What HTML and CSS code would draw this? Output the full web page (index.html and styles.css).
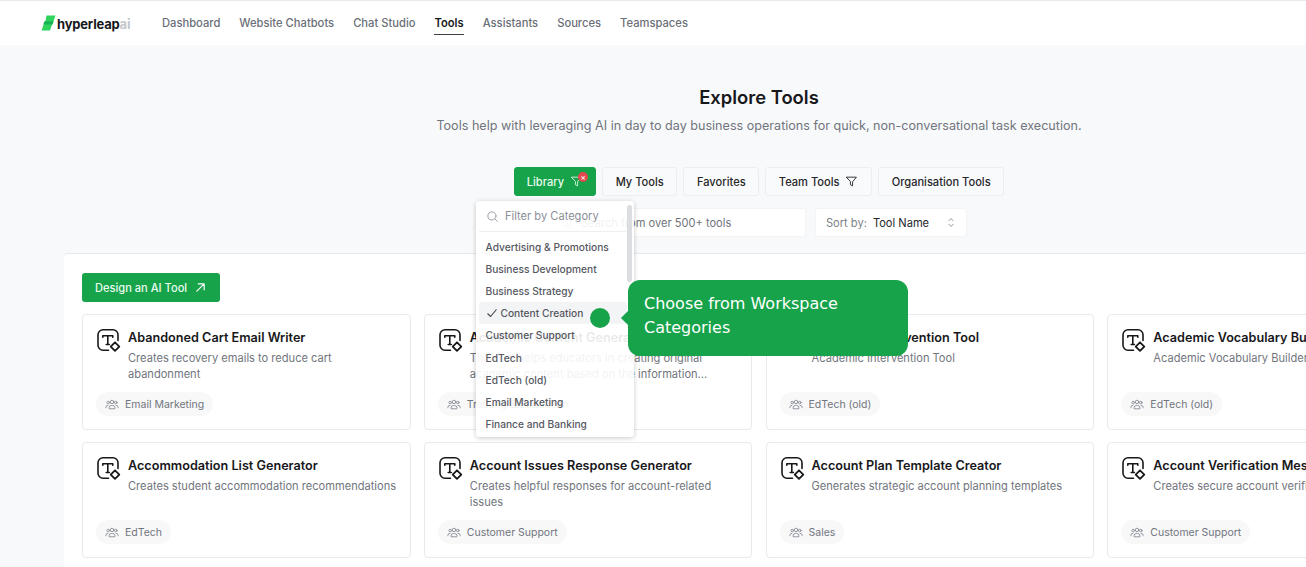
FILE: index.html
```html
<!DOCTYPE html>
<html lang="en">
<head>
<meta charset="utf-8">
<title>Explore Tools</title>
<link rel="stylesheet" href="styles.css">
</head>
<body>
<svg class="defs" width="0" height="0">
  <defs>
    <symbol id="tool" viewBox="0 0 24 24" fill="none" stroke="currentColor" stroke-width="1.6" stroke-linecap="round" stroke-linejoin="round">
      <path d="M11.5 21.2H6a5 5 0 0 1-5-5V5.8a5 5 0 0 1 5-5h10a5 5 0 0 1 5 5V11.500"/>
      <path d="M5.800 8.200V6.700h10v1.500M10.800 6.700v8.800M9.200 15.500h3.200"/>
      <path d="M18 13.300l4.300 4.300-4.300 4.300-4.300-4.300z" stroke-width="1.8"/>
    </symbol>
    <symbol id="users" viewBox="0 0 24 24" fill="none" stroke="currentColor" stroke-width="1.5" stroke-linecap="round" stroke-linejoin="round">
      <circle cx="12" cy="8.500" r="3"/>
      <circle cx="5.500" cy="9.500" r="2.200"/>
      <circle cx="18.500" cy="9.500" r="2.200"/>
      <path d="M7 19.500v-1a4 4 0 0 1 4-4h2a4 4 0 0 1 4 4v1z"/>
      <path d="M1.500 18.500v-.8a3.500 3.500 0 0 1 3.500-3.500M22.500 18.500v-.8a3.500 3.500 0 0 0-3.500-3.500"/>
    </symbol>
    <symbol id="filter" viewBox="0 0 24 24" fill="none" stroke="currentColor" stroke-width="1.7" stroke-linecap="round" stroke-linejoin="round">
      <path d="M3 4h18l-7 8.500V20l-4-2v-5.500z"/>
    </symbol>
    <symbol id="search" viewBox="0 0 24 24" fill="none" stroke="currentColor" stroke-width="1.8" stroke-linecap="round">
      <circle cx="11" cy="11" r="7.500"/><path d="M21 21l-4.500-4.500"/>
    </symbol>
  </defs>
</svg>

<header class="topbar">
  <div class="logo">
    <svg class="logo-mark" viewBox="0 0 15 16" width="15" height="16"><path fill="#2fd45f" d="M5.500 0.500h9l-1.800 5.200-2 4.700-1.700 5H0.500l2-5.300 2-4.400z"/><path fill="#16b355" d="M3.500 6.200h9.200l-1.200 3.300H2.200z"/></svg>
    <span class="logo-name">hyperleap<span class="logo-ai">ai</span></span>
  </div>
  <nav class="nav">
    <a class="nav-item">Dashboard</a>
    <a class="nav-item">Website Chatbots</a>
    <a class="nav-item">Chat Studio</a>
    <a class="nav-item is-active">Tools</a>
    <a class="nav-item">Assistants</a>
    <a class="nav-item">Sources</a>
    <a class="nav-item">Teamspaces</a>
  </nav>
</header>

<div class="page">
  <section class="hero">
    <h1 class="title">Explore Tools</h1>
    <p class="subtitle">Tools help with leveraging AI in day to day business operations for quick, non-conversational task execution.</p>
    <div class="tabs">
      <button class="tab tab-primary">Library
        <span class="filter-wrap">
          <svg class="ico-filter"><use href="#filter"/></svg>
          <span class="badge">×</span>
        </span>
      </button>
      <button class="tab">My Tools</button>
      <button class="tab">Favorites</button>
      <button class="tab">Team Tools <svg class="ico-filter dark"><use href="#filter"/></svg></button>
      <button class="tab">Organisation Tools</button>
    </div>
    <div class="controls">
      <div class="search">
        <svg class="ico-search"><use href="#search"/></svg>
        <span>Search from over 500+ tools</span>
      </div>
      <div class="sort">
        <span class="sort-label">Sort by:</span>
        <span class="sort-value">Tool Name</span>
        <svg class="chev" viewBox="0 0 10 14" width="8" height="11"><path d="M2 5l3-3 3 3M2 9l3 3 3-3" fill="none" stroke="#8a8f98" stroke-width="1.2"/></svg>
      </div>
    </div>
  </section>

  <section class="panel">
    <button class="design-btn">Design an AI Tool
      <svg viewBox="0 0 12 12" width="11" height="11"><path d="M2 10l8-8M3.500 2H10v6.500" fill="none" stroke="#fff" stroke-width="1.300" stroke-linecap="round" stroke-linejoin="round"/></svg>
    </button>
    <div class="grid">
      <article class="card">
        <div class="card-top"><svg class="ico-tool"><use href="#tool"/></svg>
          <div><h3>Abandoned Cart Email Writer</h3><p>Creates recovery emails to reduce cart abandonment</p></div></div>
        <span class="tag"><svg class="ico-users"><use href="#users"/></svg>Email Marketing</span>
      </article>
      <article class="card">
        <div class="card-top"><svg class="ico-tool"><use href="#tool"/></svg>
          <div><h3>Academic Content Generator</h3><p>This tool helps educators in creating original academic content based on the information...</p></div></div>
        <span class="tag"><svg class="ico-users"><use href="#users"/></svg>Training &amp; Education</span>
      </article>
      <article class="card">
        <div class="card-top"><svg class="ico-tool"><use href="#tool"/></svg>
          <div><h3>Academic Intervention Tool</h3><p>Academic Intervention Tool</p></div></div>
        <span class="tag"><svg class="ico-users"><use href="#users"/></svg>EdTech (old)</span>
      </article>
      <article class="card">
        <div class="card-top"><svg class="ico-tool"><use href="#tool"/></svg>
          <div><h3>Academic Vocabulary Builder</h3><p>Academic Vocabulary Builder</p></div></div>
        <span class="tag"><svg class="ico-users"><use href="#users"/></svg>EdTech (old)</span>
      </article>
      <article class="card">
        <div class="card-top"><svg class="ico-tool"><use href="#tool"/></svg>
          <div><h3>Accommodation List Generator</h3><p>Creates student accommodation recommendations</p></div></div>
        <span class="tag"><svg class="ico-users"><use href="#users"/></svg>EdTech</span>
      </article>
      <article class="card">
        <div class="card-top"><svg class="ico-tool"><use href="#tool"/></svg>
          <div><h3>Account Issues Response Generator</h3><p>Creates helpful responses for account-related issues</p></div></div>
        <span class="tag"><svg class="ico-users"><use href="#users"/></svg>Customer Support</span>
      </article>
      <article class="card">
        <div class="card-top"><svg class="ico-tool"><use href="#tool"/></svg>
          <div><h3>Account Plan Template Creator</h3><p>Generates strategic account planning templates</p></div></div>
        <span class="tag"><svg class="ico-users"><use href="#users"/></svg>Sales</span>
      </article>
      <article class="card">
        <div class="card-top"><svg class="ico-tool"><use href="#tool"/></svg>
          <div><h3>Account Verification Message</h3><p>Creates secure account verification messages</p></div></div>
        <span class="tag"><svg class="ico-users"><use href="#users"/></svg>Customer Support</span>
      </article>
    </div>
  </section>

  <div class="dropdown">
    <div class="dd-search"><svg class="ico-search"><use href="#search"/></svg>Filter by Category</div>
    <ul class="dd-list">
      <li>Advertising &amp; Promotions</li>
      <li>Business Development</li>
      <li>Business Strategy</li>
      <li class="is-selected"><svg viewBox="0 0 12 12" width="12" height="12"><path d="M1.500 6.500l3 3 6-7" fill="none" stroke="#444" stroke-width="1.100"/></svg>Content Creation</li>
      <li>Customer Support</li>
      <li>EdTech</li>
      <li>EdTech (old)</li>
      <li>Email Marketing</li>
      <li>Finance and Banking</li>
    </ul>
    <span class="dd-thumb"></span>
  </div>

  <span class="tour-dot"></span>
  <div class="tour-tip">Choose from Workspace Categories</div>
</div>
</body>
</html>
```
FILE: styles.css
```css
* { box-sizing: border-box; }
html, body { margin: 0; height: 100%; overflow: hidden; }
body {
  width: 1306px;
  height: 567px;
  background: #f8f9fb;
  font-family: Inter, "Liberation Sans", sans-serif;
  color: #18181b;
  -webkit-font-smoothing: antialiased;
}
.defs { position: absolute; }
.topbar {
  height: 45px;
  background: #fff;
  border-top: 1px solid #e8e9ee;
  display: flex;
  align-items: center;
  padding-left: 41px;
}
.logo { display: flex; align-items: center; gap: 1px; width: 121px; }
.logo-mark { flex: none; margin-top: -1px; }
.logo-name { font-weight: 700; font-size: 13px; letter-spacing: -0.2px; color: #18181b; margin-top: 2px; }
.logo-ai { color: #c4c7cc; }
.nav { display: flex; gap: 19px; height: 100%; align-items: center; }
.nav-item { font-size: 11.2px; font-weight: 500; color: #6b7078; position: relative; line-height: 20px; }
.nav-item.is-active { color: #18181b; font-weight: 600; }
.nav-item.is-active::after {
  content: "";
  position: absolute;
  left: 0; right: 0; bottom: -2px;
  height: 1px;
  background: #3f3f46;
}
.page { position: relative; width: 1518px; }
.hero { display: flex; flex-direction: column; align-items: center; padding-top: 38px; }
.title { margin: 0; font-size: 18.4px; line-height: 28px; font-weight: 600; color: #18181b; }
.subtitle { margin: 5px 0 0; font-size: 12.6px; line-height: 20px; color: #71757d; }
.tabs { display: flex; gap: 6px; margin-top: 31px; }
.tab {
  height: 29px;
  display: flex;
  align-items: center;
  gap: 6px;
  padding: 0 12.6px;
  font: 500 11.1px Inter, "Liberation Sans", sans-serif;
  color: #27272a;
  background: #f9fafb;
  border: 1px solid #eceef2;
  border-radius: 3px;
}
.tab-primary { background: #16a34a; border-color: #16a34a; color: #e9fbef; padding: 0 12px; }
.filter-wrap { position: relative; display: flex; }
.ico-filter { width: 13px; height: 13px; color: #d6f5e0; display: block; }
.ico-filter.dark { color: #27272a; }
.badge {
  position: absolute;
  top: -3px; right: -5px;
  width: 10px; height: 10px;
  border-radius: 50%;
  background: #e5484d;
  color: #fff;
  font-size: 8px;
  line-height: 10px;
  text-align: center;
}
.controls { display: flex; gap: 9px; margin-top: 12px; }
.search, .sort {
  height: 29px;
  background: #fff;
  border: 1px solid #f3f4f6;
  border-radius: 3px;
  display: flex;
  align-items: center;
  font-size: 11.1px;
}
.search { width: 255px; padding-left: 9px; gap: 7px; color: #71757d; }
.ico-search { width: 13px; height: 13px; color: #9a9ea6; flex: none; }
.sort { width: 152px; padding-left: 10px; gap: 6px; }
.sort-label { color: #7b7f87; }
.sort-value { color: #27272a; width: 68px; }
.panel {
  margin: 16px 64px 0;
  padding: 19px 18px 0;
  background: #fff;
  border-top: 1px solid #e8e9ee;
  border-top-left-radius: 4px;
  height: 400px;
}
.design-btn {
  height: 29px;
  width: 138px;
  display: flex;
  align-items: center;
  justify-content: space-between;
  padding: 0 14px 0 13px;
  background: #16a34a;
  border: 0;
  border-radius: 3px;
  font: 500 11.1px Inter, "Liberation Sans", sans-serif;
  color: #eafbf0;
}
.grid {
  display: grid;
  grid-template-columns: repeat(4, 328.6px);
  grid-auto-rows: 116px;
  column-gap: 13.2px;
  row-gap: 12px;
  margin-top: 12px;
}
.card {
  position: relative;
  border: 1px solid #e9eaee;
  border-radius: 4px;
  background: #fff;
  padding: 13px 13px 0 14px;
}
.card-top { display: flex; gap: 7px; }
.ico-tool { width: 24px; height: 24px; flex: none; color: #18181b; margin-top: 1px; }
.card h3 { margin: 0; font-size: 12.65px; line-height: 20px; font-weight: 600; color: #18181b; white-space: nowrap; }
.card p { margin: 2px 0 0; font-size: 11.1px; line-height: 16px; color: #71757d; }
.tag {
  position: absolute;
  left: 13px; top: 77px;
  height: 24px;
  display: inline-flex;
  align-items: center;
  gap: 6px;
  padding: 0 9px 0 9px;
  background: #f8f8f9;
  border-radius: 12px;
  font-size: 10.5px;
  font-weight: 400;
  color: #71757d;
  white-space: nowrap;
}
.ico-users { width: 14px; height: 14px; color: #858a92; }
.dropdown {
  position: absolute;
  left: 476px; top: 156px;
  width: 158px; height: 236px;
  background: rgba(255, 255, 255, .9);
  border-radius: 4px;
  box-shadow: 0 1px 5px rgba(0, 0, 0, .22);
  padding: 0 3px;
}
.dd-search {
  height: 31px;
  display: flex;
  align-items: center;
  gap: 6px;
  padding-left: 7px;
  margin-right: 4px;
  font-size: 11.1px;
  color: #8b8f97;
  border-bottom: 1px solid #eeeff2;
}
.dd-list { list-style: none; margin: 4px 4px 0 0; padding: 0; }
.dd-list li {
  height: 22.1px;
  display: flex;
  align-items: center;
  gap: 3px;
  padding-left: 6.5px;
  font-size: 10.2px;
  font-weight: 500;
  color: #55585f;
  border-radius: 3px;
  white-space: nowrap;
}
.dd-list li.is-selected { background: #f3f4f5; }
.dd-thumb {
  position: absolute;
  right: 2px; top: 4px;
  width: 5px; height: 77px;
  background: #dcdde0;
  border-radius: 3px;
}
.tour-dot {
  position: absolute;
  left: 590px; top: 263px;
  width: 20px; height: 20px;
  border-radius: 50%;
  background: #16a34a;
}
.tour-tip {
  position: absolute;
  left: 628px; top: 235px;
  width: 280px; height: 76px;
  padding: 12px 16px;
  background: #16a34a;
  border-radius: 12px;
  color: #fff;
  font-family: "DejaVu Sans", sans-serif;
  font-size: 16px;
  line-height: 24px;
}
.tour-tip::before {
  content: "";
  position: absolute;
  left: -5px; top: 33px;
  width: 10px; height: 10px;
  background: #16a34a;
  transform: rotate(45deg);
}
```
